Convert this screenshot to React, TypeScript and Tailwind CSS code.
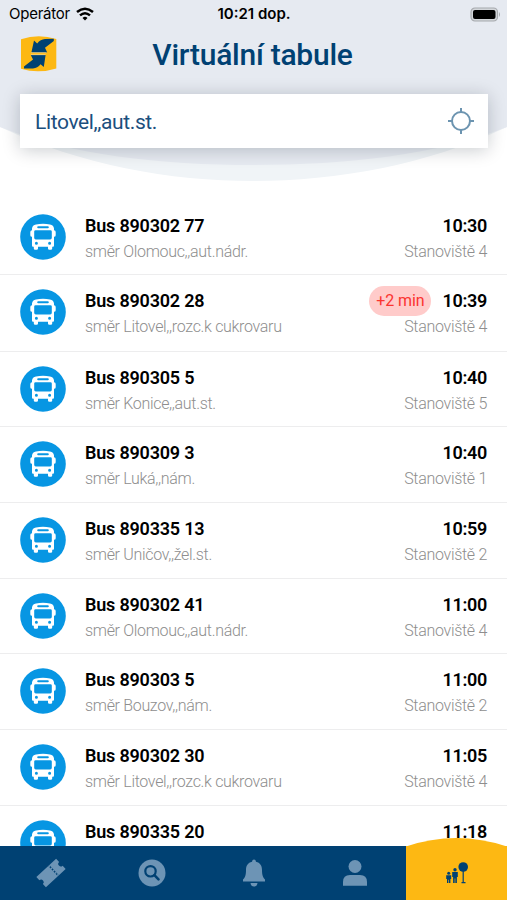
type Departure = {
  line: string;
  direction?: string;
  time: string;
  platform?: number;
  delay?: string;
};

const departures: Departure[] = [
  { line: "Bus 890302 77", direction: "směr Olomouc,,aut.nádr.", time: "10:30", platform: 4 },
  { line: "Bus 890302 28", direction: "směr Litovel,,rozc.k cukrovaru", time: "10:39", platform: 4, delay: "+2 min" },
  { line: "Bus 890305 5", direction: "směr Konice,,aut.st.", time: "10:40", platform: 5 },
  { line: "Bus 890309 3", direction: "směr Luká,,nám.", time: "10:40", platform: 1 },
  { line: "Bus 890335 13", direction: "směr Uničov,,žel.st.", time: "10:59", platform: 2 },
  { line: "Bus 890302 41", direction: "směr Olomouc,,aut.nádr.", time: "11:00", platform: 4 },
  { line: "Bus 890303 5", direction: "směr Bouzov,,nám.", time: "11:00", platform: 2 },
  { line: "Bus 890302 30", direction: "směr Litovel,,rozc.k cukrovaru", time: "11:05", platform: 4 },
  { line: "Bus 890335 20", time: "11:18" },
];

function BusIcon() {
  return (
    <svg viewBox="0 0 46 46" className="size-[46px] shrink-0">
      <circle cx="23" cy="23" r="22.8" fill="#0796e3" />
      <path
        fill="#fff"
        fillRule="evenodd"
        d="M16 10.4Q23 9.2 30 10.4Q33.6 11 34 14.5V16.2Q35.7 16.2 35.7 18V21.2Q35.7 22.8 34 22.8V31.6Q34 32.8 33 32.8H32.2V34.4Q32.2 35.8 30.8 35.8H29.4Q28 35.8 28 34.4V32.8H18V34.4Q18 35.8 16.6 35.8H15.2Q13.8 35.8 13.8 34.4V32.8H13Q12 32.8 12 31.6V22.8Q10.3 22.8 10.3 21.2V18Q10.3 16.2 12 16.2V14.5Q12.4 11 16 10.4ZM18.2 12.3Q17.2 12.3 17.2 13.3T18.2 14.3H27.8Q28.8 14.3 28.8 13.3T27.8 12.3ZM15.6 16.2Q14.2 16.2 14.2 17.6V23.8Q14.2 25.4 15.8 25.4H30.2Q31.8 25.4 31.8 23.8V17.6Q31.8 16.2 30.4 16.2ZM16.4 27.8A1.5 1.5 0 1 0 16.4 30.8A1.5 1.5 0 1 0 16.4 27.8ZM29.6 27.8A1.5 1.5 0 1 0 29.6 30.8A1.5 1.5 0 1 0 29.6 27.8Z"
      />
    </svg>
  );
}

function DepartureRow({ line, direction, time, platform, delay }: Departure) {
  return (
    <li className={`flex shrink-0 border-b border-[#ededee] px-5 pt-[14px] ${delay ? "h-[76.5px]" : "h-[75.7px]"}`}>
      <BusIcon />
      <div className="-mt-[1px] ml-[19px] flex flex-1 flex-col">
        <span className="text-[18px] leading-[26px] font-semibold tracking-[-0.2px] text-black">{line}</span>
        {direction && (
          <span className="text-[16px] leading-[26px] font-light tracking-[-0.32px] text-[#8e8e8e]">{direction}</span>
        )}
      </div>
      <div className="-mt-[1px] flex flex-col items-end">
        <span className="flex h-[26px] items-center">
          {delay && (
            <span className="mr-[11px] flex h-[30px] items-center rounded-full bg-[#ffcbca] px-[7px] text-[16px] tracking-[-0.1px] text-[#fb3430]">
              {delay}
            </span>
          )}
          <span className="text-[18px] leading-[26px] font-semibold tracking-[-0.3px] text-black">{time}</span>
        </span>
        {platform && (
          <span className="text-[16px] leading-[26px] font-light tracking-[-0.3px] text-[#8e8e8e]">
            Stanoviště {platform}
          </span>
        )}
      </div>
    </li>
  );
}

function StatusBar() {
  return (
    <div className="flex h-7 items-center font-['Inter',sans-serif] text-black">
      <div className="flex flex-1 items-center gap-[6px] pl-[9px]">
        <span className="text-[15px] tracking-[-0.25px]">Operátor</span>
        <svg viewBox="0 0 18 14" className="h-[14px] w-[18px]" fill="none" stroke="#000" strokeWidth="2.5">
          <path d="M1 5Q9-1.6 17 5" />
          <path d="M4 8.4Q9 4 14 8.4" />
          <path d="M6.5 10.9Q9 8.5 11.5 10.9L9 13.5Z" fill="#000" stroke="none" />
        </svg>
      </div>
      <span className="mr-[2px] text-[15px] font-semibold">10:21 dop.</span>
      <div className="flex flex-1 justify-end pr-[6px]">
        <svg viewBox="0 0 31 15" className="h-[15px] w-[31px]">
          <rect x="1" y="1" width="26.5" height="13" rx="4" fill="#d3d6da" stroke="#a6a9ad" strokeWidth="1.2" />
          <rect x="3" y="3" width="22.5" height="9" rx="2" fill="#000" />
          <path d="M29 5Q31 7.5 29 10Z" fill="#a6a9ad" />
        </svg>
      </div>
    </div>
  );
}

function Logo() {
  return (
    <svg viewBox="0 0 37 36" className="h-9 w-[37px]">
      <path d="M1 3.2Q18.5-2.5 36.3 3V32.4Q18.5 38 1 32.8Z" fill="#fdb813" />
      <path d="M14 4.6L17.2 7.4Q20.5 3.4 25 3L33.8 2.8V5L25 11.8L27.2 16.4H11.4Z" fill="#004173" />
      <path d="M10.8 19H25.6L23.8 31L20.6 28.2Q17.5 32.2 13 32.4L4 32.6V30.6L13 23.4Z" fill="#004173" />
      <path d="M11 16.7H26.6M11 18.7H25.6" stroke="#f5e3b5" strokeWidth="0.6" />
    </svg>
  );
}

function TabBar() {
  return (
    <nav className="flex h-[54px] shrink-0 items-center bg-[#004173] text-[#6d94b5]">
      <div className="flex flex-1 justify-center">
        <svg viewBox="0 0 30 30" className="size-[30px]">
          <g transform="rotate(-43 15 15)" fill="currentColor">
            <path d="M1.5 8H17.8V22H1.5V17.6A2.6 2.6 0 0 0 1.5 12.4Z" />
            <path d="M19.3 8H28.5V12.4A2.6 2.6 0 0 0 28.5 17.6V22H19.3Z" />
            <path d="M18.5 8V22" stroke="currentColor" strokeWidth="1.6" strokeDasharray="1.6 1.5" />
          </g>
        </svg>
      </div>
      <div className="flex flex-1 justify-center">
        <svg viewBox="0 0 28 28" className="size-7">
          <circle cx="14" cy="14" r="13.5" fill="currentColor" />
          <circle cx="12.5" cy="12.3" r="5.2" fill="none" stroke="#004173" strokeWidth="2.2" />
          <path d="M16.4 16.2L20.5 20.3" stroke="#004173" strokeWidth="2.6" strokeLinecap="round" />
        </svg>
      </div>
      <div className="flex flex-1 justify-center">
        <svg viewBox="0 0 24 28" className="h-7 w-6" fill="currentColor">
          <path d="M12 0.5Q13.8 0.5 14 2.8C18.2 3.7 20 7 20 11C20 16.3 21 18.5 23 20.5V22.5H1V20.5C3 18.5 4 16.3 4 11C4 7 5.8 3.7 10 2.8Q10.2 0.5 12 0.5Z" />
          <path d="M8.5 24H15.5Q15 27.5 12 27.5T8.5 24Z" />
        </svg>
      </div>
      <div className="flex flex-1 justify-center">
        <svg viewBox="0 0 26 28" className="h-7 w-[26px]" fill="currentColor">
          <circle cx="13" cy="7.5" r="6.5" />
          <path d="M1 26.8V23Q1 16 8 16H18Q25 16 25 23V26.8Z" />
        </svg>
      </div>
      <div className="relative flex h-full w-[101px] justify-center bg-[#fdb813] pt-[15px]">
        <svg viewBox="0 0 101 9" className="absolute -top-2 left-0 h-[9px] w-[101px]">
          <path d="M0 8.5Q50-8.5 101 8.5V9H0Z" fill="#fdb813" />
        </svg>
        <svg viewBox="0 0 24 24" className="h-6 w-6" fill="#004173">
          <circle cx="18.2" cy="6" r="4.8" />
          <path d="M17.6 10H18.8V21H20.5V22.2H16.5V21H17.6Z" />
          <circle cx="10" cy="8.8" r="1.7" />
          <path d="M7.2 11H12.8V16H11.9V22H10.3V17.5H9.7V22H8.1V16H7.2Z" />
          <circle cx="3.7" cy="12.3" r="1.5" />
          <path d="M1.2 14.2H6.2V18H5.4V22H4V18.8H3.4V22H2V18H1.2Z" />
        </svg>
      </div>
    </nav>
  );
}

export default function App() {
  return (
    <div className="flex h-[900px] w-[507px] flex-col overflow-hidden bg-white font-['Roboto',sans-serif]">
      <header className="relative flex h-[199.5px] shrink-0 flex-col">
        <svg viewBox="0 0 507 200" className="absolute top-0 left-0 h-[200px] w-[507px]">
          <path d="M0 0H507V127C427 165 336 181 253 181S80 165 0 127Z" fill="#f0f4f7" />
          <path d="M0 0H507V127C437 155 346 165 253 165S70 155 0 127Z" fill="#e6eaf1" />
        </svg>
        <div className="relative">
          <StatusBar />
        </div>
        <div className="relative flex h-[66px] items-start pt-2 pl-5">
          <Logo />
          <h1 className="mt-[1px] mr-5 flex-1 pr-[39px] text-center text-[30px] leading-[36px] font-medium tracking-[-0.25px] text-[#004173]">
            Virtuální tabule
          </h1>
        </div>
        <div className="relative mr-[19px] ml-5 flex h-[54px] shrink-0 items-center justify-between bg-white pr-[13px] pl-[15px] shadow-[0_2px_18px_rgba(0,20,30,0.22)]">
          <span className="pt-[3px] text-[21px] tracking-[-0.38px] text-[#1b4f7e]">Litovel,,aut.st.</span>
          <svg viewBox="0 0 28 28" className="size-7" fill="none" stroke="#6c94b0" strokeWidth="2">
            <circle cx="14" cy="14" r="9" />
            <path d="M14 1V6M14 22V27M1 14H6M22 14H27" />
          </svg>
        </div>
      </header>
      <ul className="flex min-h-0 flex-1 flex-col overflow-hidden">
        {departures.map((d) => (
          <DepartureRow key={d.line} {...d} />
        ))}
      </ul>
      <TabBar />
    </div>
  );
}
